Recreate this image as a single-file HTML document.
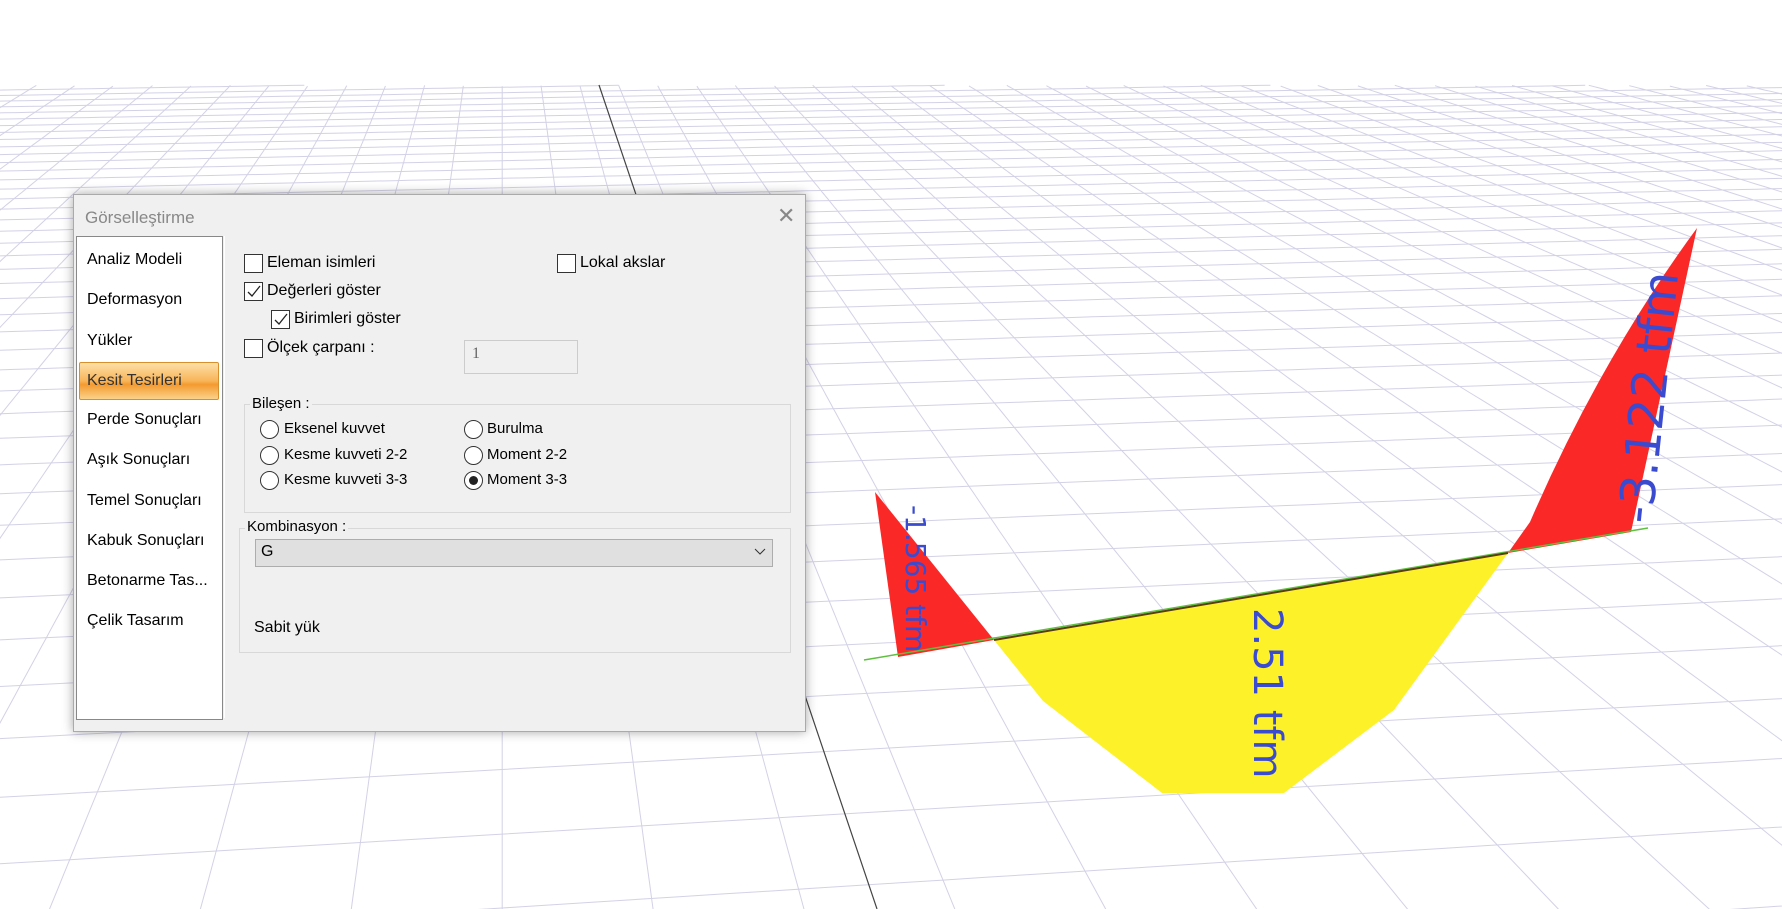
<!DOCTYPE html>
<html><head><meta charset="utf-8"><style>
html,body{margin:0;width:1782px;height:909px;overflow:hidden}
body{background:#fff;font-family:"Liberation Sans",sans-serif;position:relative}
svg#g{position:absolute;left:0;top:0}
.dlg{position:absolute;left:73px;top:194px;width:731px;height:536px;background:#f0f0f0;border:1px solid #aaa;box-shadow:0 0 10px rgba(0,0,0,.35)}
.a{position:absolute;white-space:nowrap;font-size:16px;color:#000}
.cb{position:absolute;width:17px;height:17px;border:1px solid #333;background:#fff}
.rd{position:absolute;width:17px;height:17px;border:1px solid #333;border-radius:50%;background:#fff}
.grp{position:absolute;border:1px solid #d8d8d8}
.lbl{position:absolute;background:#f0f0f0;font-size:15px;padding:0 2px}
.t{position:absolute;color:#3a4bd0;white-space:nowrap;font-family:"DejaVu Sans",sans-serif;transform-origin:0 0}
</style></head><body>
<svg id="g" width="1782" height="909"></svg>
<svg style="position:absolute;left:0;top:0" width="1782" height="909">
<line x1="599" y1="85" x2="877" y2="909" stroke="#444" stroke-width="1.2"/>
<polygon points="875,492 994,640 898,657" fill="#fb2828"/>
<polygon points="994,640 1508,553 1394,710 1284,793 1162,793 1043,701" fill="#fdf22a"/>
<path d="M1508,553 L1530,522 Q1600,360 1697,228 L1631,532 Z" fill="#fb2828"/>
<line x1="864" y1="660" x2="1648" y2="528" stroke="#5fc040" stroke-width="1.5"/>
<line x1="994" y1="640" x2="1508" y2="553" stroke="#5a3c18" stroke-width="2"/>
</svg>
<div class="t" style="left:932px;top:505px;font-size:28px;transform:rotate(90deg)">-1.565 tfm</div>
<div class="t" style="left:1290px;top:608px;font-size:40px;transform:rotate(90deg)">2.51 tfm</div>
<div class="t" style="left:1608px;top:520px;font-size:48px;transform:rotate(-84deg)">-3.122 tfm</div>

<div class="dlg">
<div class="a" style="left:11px;top:13px;font-size:17px;color:#888">Görselleştirme</div>
<div class="a" style="left:703px;top:8px;font-size:22px;color:#888">✕</div>
<div style="position:absolute;left:2px;top:41px;width:145px;height:482px;background:#fff;border:1px solid #888"></div>
<div style="position:absolute;left:5px;top:167px;width:138px;height:36px;border:1px solid #d8902c;border-radius:2px;background:linear-gradient(#fde0a8,#f8b458 50%,#f49a30 60%,#fbd28a)"></div>
<div style="position:absolute;left:150px;top:41px;width:578px;height:482px;background:#f0f0f0;border-left:1px solid #fff"></div>
<div class="a" style="left:13px;top:56px">Analiz Modeli</div>
<div class="a" style="left:13px;top:96px">Deformasyon</div>
<div class="a" style="left:13px;top:137px">Yükler</div>
<div class="a" style="left:13px;top:177px;color:#333">Kesit Tesirleri</div>
<div class="a" style="left:13px;top:216px">Perde Sonuçları</div>
<div class="a" style="left:13px;top:256px">Aşık Sonuçları</div>
<div class="a" style="left:13px;top:297px">Temel Sonuçları</div>
<div class="a" style="left:13px;top:337px">Kabuk Sonuçları</div>
<div class="a" style="left:13px;top:377px">Betonarme Tas...</div>
<div class="a" style="left:13px;top:417px">Çelik Tasarım</div>

<div class="cb" style="left:170px;top:59px"></div><div class="a" style="left:193px;top:59px">Eleman isimleri</div>
<div class="cb" style="left:483px;top:59px"></div><div class="a" style="left:506px;top:59px">Lokal akslar</div>
<div class="cb" style="left:170px;top:87px"><svg width="17" height="17"><path d="M3 9 L7 13 L15 3" stroke="#222" fill="none" stroke-width="1.3"/></svg></div><div class="a" style="left:193px;top:87px">Değerleri göster</div>
<div class="cb" style="left:197px;top:115px"><svg width="17" height="17"><path d="M3 9 L7 13 L15 3" stroke="#222" fill="none" stroke-width="1.3"/></svg></div><div class="a" style="left:220px;top:115px">Birimleri göster</div>
<div class="cb" style="left:170px;top:144px"></div><div class="a" style="left:193px;top:144px">Ölçek çarpanı :</div>
<div style="position:absolute;left:390px;top:145px;width:112px;height:32px;background:#f0f0f0;border:1px solid #ccc"></div>
<div class="a" style="left:398px;top:150px;color:#666;font-family:'Liberation Serif',serif">1</div>

<div class="grp" style="left:170px;top:209px;width:545px;height:107px"></div>
<div class="lbl" style="left:176px;top:200px">Bileşen :</div>
<div class="rd" style="left:186px;top:225px"></div><div class="a" style="left:210px;top:225px;font-size:15px">Eksenel kuvvet</div>
<div class="rd" style="left:186px;top:251px"></div><div class="a" style="left:210px;top:251px;font-size:15px">Kesme kuvveti 2-2</div>
<div class="rd" style="left:186px;top:276px"></div><div class="a" style="left:210px;top:276px;font-size:15px">Kesme kuvveti 3-3</div>
<div class="rd" style="left:390px;top:225px"></div><div class="a" style="left:413px;top:225px;font-size:15px">Burulma</div>
<div class="rd" style="left:390px;top:251px"></div><div class="a" style="left:413px;top:251px;font-size:15px">Moment 2-2</div>
<div class="rd" style="left:390px;top:276px"><div style="position:absolute;left:4px;top:4px;width:9px;height:9px;border-radius:50%;background:#222"></div></div><div class="a" style="left:413px;top:276px;font-size:15px">Moment 3-3</div>

<div class="grp" style="left:165px;top:333px;width:550px;height:123px"></div>
<div class="lbl" style="left:171px;top:323px">Kombinasyon :</div>
<div style="position:absolute;left:181px;top:344px;width:516px;height:26px;background:#e0e0e0;border:1px solid #adadad"></div>
<div class="a" style="left:187px;top:348px">G</div>
<svg style="position:absolute;left:680px;top:353px" width="12" height="8"><path d="M1 1 L6 6 L11 1" stroke="#333" fill="none"/></svg>
<div class="a" style="left:180px;top:424px">Sabit yük</div>
</div>
<script>
var s=document.getElementById('g'),o='';
var a=0.12,ca=Math.cos(a),sa=Math.sin(a),f=2080,FH=15400,cx=753,hy=-200,ZMAX=54;
function P(X,Z){var xr=X*ca-Z*sa,zr=X*sa+Z*ca;if(zr<0.5||zr>ZMAX)return null;return[cx+f*xr/zr,hy+FH/zr];}
function L(x1,z1,x2,z2){var n=400,pts=[];for(var k=0;k<=n;k++){var t=k/n,p=P(x1+(x2-x1)*t,z1+(z2-z1)*t);if(p&&p[1]<1000&&p[0]>-600&&p[0]<2400)pts.push(p[0].toFixed(1)+','+p[1].toFixed(1));}
if(pts.length>1)o+='<polyline points="'+pts.join(' ')+'"/>';}
for(var i=-60;i<=60;i++)L(i,-10,i,70);
for(var j=-10;j<=70;j++)L(-60,j,60,j);
s.innerHTML='<g fill="none" stroke="#d3d1e6" stroke-width="1">'+o+'</g>';
</script>
</body></html>
